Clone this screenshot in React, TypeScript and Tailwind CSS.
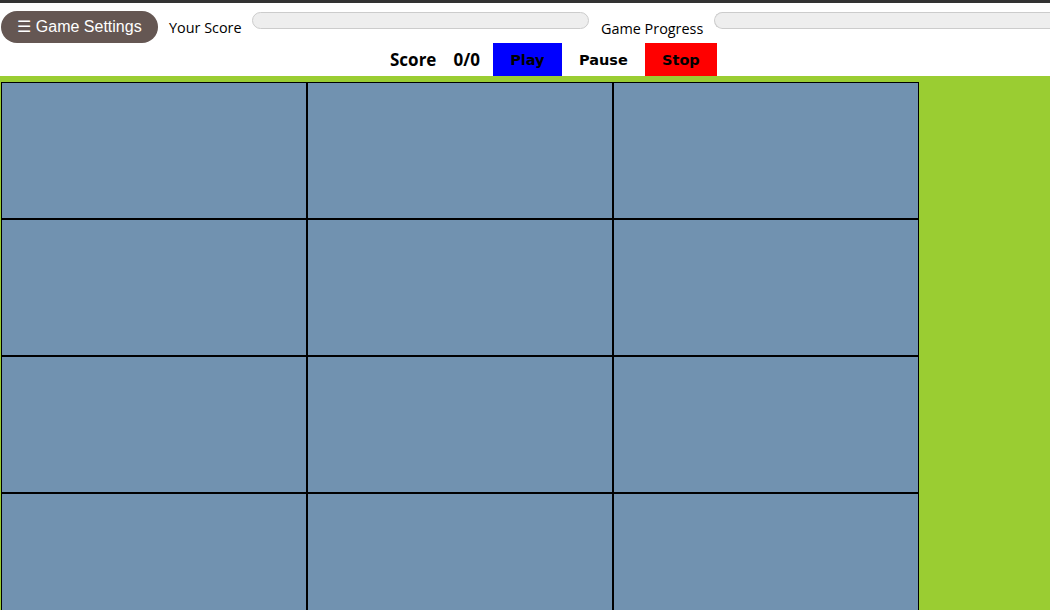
export default function App() {
  const cells = Array.from({ length: 12 });

  return (
    <div className="w-[1050px] h-[610px] overflow-hidden bg-white font-['Open_Sans',sans-serif]">
      <div className="h-[3px] bg-[#333333]" />

      {/* Header */}
      <div className="h-[73px]">
        <div className="flex items-start pt-[8px] h-[32px] box-content">
          <button className="ml-[1px] h-[32px] w-[157px] rounded-full bg-[#655753] text-white text-[16px] font-['Liberation_Sans',sans-serif]">
            ☰ Game Settings
          </button>
          <span className="ml-[11px] mt-[8px] w-[72px] text-[14.4px] leading-[18px] text-black whitespace-nowrap">Your Score</span>
          <div className="ml-[11px] mt-[1px] h-[17px] w-[337px] rounded-full border border-[#cccccc] bg-[#eeeeee]" />
          <span className="ml-[12px] mt-[9px] w-[102px] text-[14.4px] leading-[18px] text-black whitespace-nowrap">Game Progress</span>
          <div className="ml-[11px] mt-[1px] h-[17px] flex-1 rounded-l-full border border-r-0 border-[#cccccc] bg-[#eeeeee]" />
        </div>

        <div className="flex items-center h-[33px] pl-[390px]">
          <span className="text-[17px] font-bold text-black">Score</span>
          <span className="ml-[17px] text-[17px] font-bold text-black">0/0</span>
          <button className="ml-[13px] h-[33px] w-[69px] bg-[#0000ff] pt-[2px] text-[14.5px] font-bold text-black font-['DejaVu_Sans',sans-serif]">
            Play
          </button>
          <button className="h-[33px] w-[83px] bg-white pt-[2px] text-[14.5px] font-bold text-black font-['DejaVu_Sans',sans-serif]">
            Pause
          </button>
          <button className="h-[33px] w-[72px] bg-[#ff0000] pt-[2px] text-[14.5px] font-bold text-black font-['DejaVu_Sans',sans-serif]">
            Stop
          </button>
        </div>
      </div>

      {/* Board */}
      <div className="h-[534px] bg-[#9acd32] pt-[6px] pl-[1px]">
        <div className="grid grid-cols-[306px_306px_306px]">
          {cells.map((_, i) => (
            <div key={i} className="h-[137px] border border-black bg-[#7192b0]" />
          ))}
        </div>
      </div>
    </div>
  );
}
